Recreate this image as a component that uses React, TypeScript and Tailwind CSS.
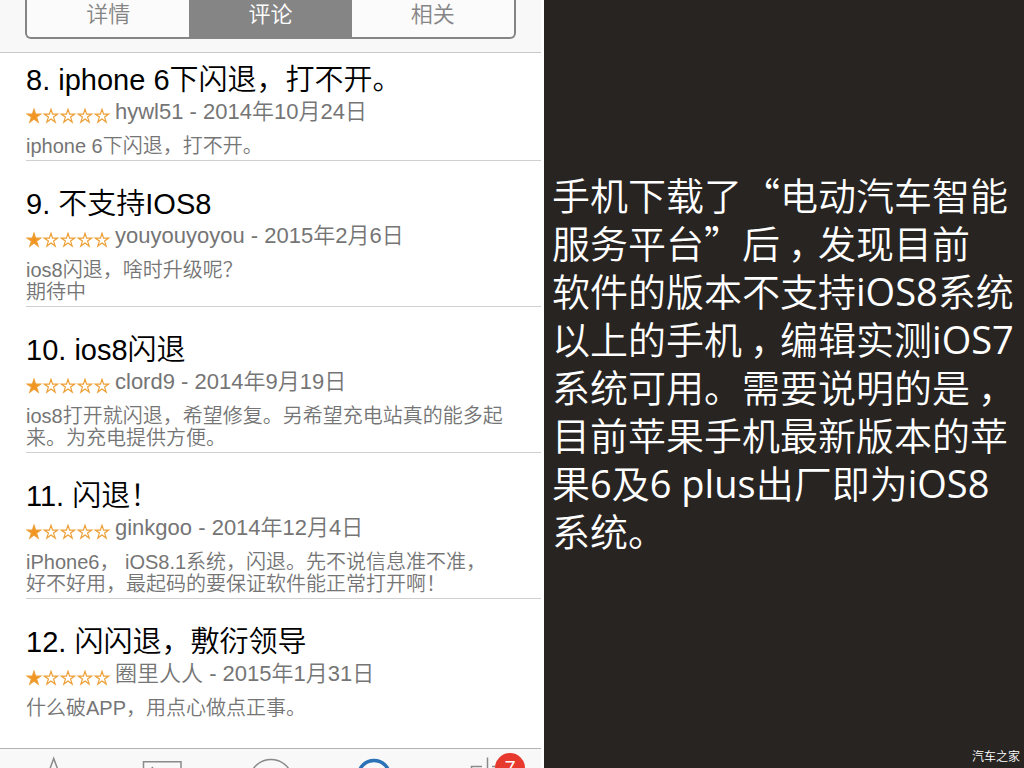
import type { ReactNode } from 'react';

type Review = {
  id: number;
  title: string;
  author: string;
  date: string;
  rating: number;
  content: string[];
};

const REVIEWS: Review[] = [
  {
    id: 8,
    title: 'iphone 6下闪退，打不开。',
    author: 'hywl51',
    date: '2014年10月24日',
    rating: 1,
    content: ['iphone 6下闪退，打不开。'],
  },
  {
    id: 9,
    title: '不支持IOS8',
    author: 'youyouyoyou',
    date: '2015年2月6日',
    rating: 1,
    content: ['ios8闪退，啥时升级呢？', '期待中'],
  },
  {
    id: 10,
    title: 'ios8闪退',
    author: 'clord9',
    date: '2014年9月19日',
    rating: 1,
    content: [
      'ios8打开就闪退，希望修复。另希望充电站真的能多起',
      '来。为充电提供方便。',
    ],
  },
  {
    id: 11,
    title: '闪退！',
    author: 'ginkgoo',
    date: '2014年12月4日',
    rating: 1,
    content: [
      'iPhone6， iOS8.1系统，闪退。先不说信息准不准，',
      '好不好用，最起码的要保证软件能正常打开啊！',
    ],
  },
  {
    id: 12,
    title: '闪闪退，敷衍领导',
    author: '圈里人人',
    date: '2015年1月31日',
    rating: 1,
    content: ['什么破APP，用点心做点正事。'],
  },
];

const SEGMENTS = ['详情', '评论', '相关'];

const Stars = ({ rating }: { rating: number }) => (
  <div className="flex pt-2" role="img" aria-label={`${rating} / 5`}>
    {[1, 2, 3, 4, 5].map((n) => (
      <svg key={n} width="17" height="17" viewBox="0 0 17 17">
        <path
          d="M8 1.3 L9.6 6.1 L14.7 6.1 L10.6 9.1 L12.2 14.1 L8 11.1 L3.8 14.1 L5.4 9.1 L1.3 6.1 L6.4 6.1 Z"
          fill={n <= rating ? '#f29420' : 'none'}
          stroke="#eda038"
          strokeWidth="1.2"
        />
      </svg>
    ))}
  </div>
);

const ReviewItem = ({ review }: { review: Review }) => (
  <li className="border-b border-[#d0d0d0] pt-[27px] pb-[3px] first:pt-[11px] last:border-0">
    <h3 className="text-[29px] leading-8 text-black">
      {review.id}. {review.title}
    </h3>
    <div className="flex h-8 items-center gap-1">
      <Stars rating={review.rating} />
      <p className="text-[22px] leading-8 text-[#757575]">
        {review.author} - {review.date}
      </p>
    </div>
    <p className="mt-[7px] text-[20px] leading-[22px] text-[#757575]">
      {review.content.map((line) => (
        <span key={line} className="block whitespace-nowrap">
          {line}
        </span>
      ))}
    </p>
  </li>
);

const TabButton = ({
  label,
  children,
}: {
  label: string;
  children: ReactNode;
}) => (
  <button
    type="button"
    aria-label={label}
    className="relative flex flex-1 justify-center overflow-hidden"
  >
    {children}
  </button>
);

const TabIcon = ({ children }: { children: ReactNode }) => (
  <svg
    width="60"
    height="20"
    viewBox="0 0 60 20"
    fill="none"
    stroke="#8a8a8a"
    strokeWidth="1.5"
  >
    {children}
  </svg>
);

const TabBar = () => (
  <nav className="flex h-5 shrink-0 border-t border-[#b2b2b2] bg-[#f8f8f8]">
    <TabButton label="精品推荐">
      <TabIcon>
        <path d="M25.5 21 L29.7 9.5 L34 21" />
      </TabIcon>
    </TabButton>
    <TabButton label="排行榜">
      <TabIcon>
        <path d="M11.5 21 V12.7 H49 V21 M19.5 19.5 L21 18" />
      </TabIcon>
    </TabButton>
    <TabButton label="探索">
      <TabIcon>
        <circle cx="30" cy="32" r="21.5" />
      </TabIcon>
    </TabButton>
    <TabButton label="搜索">
      <TabIcon>
        <circle cx="25" cy="27" r="15.5" stroke="#2a72b5" strokeWidth="3.5" />
      </TabIcon>
    </TabButton>
    <TabButton label="更新">
      <TabIcon>
        <path d="M14.5 21 V17.5 H25 M30.5 8.5 V21 M35 17.5 H46" />
      </TabIcon>
      <span className="absolute top-1 right-4 flex size-[30px] justify-center rounded-full bg-[#e8392f] pt-[3px] text-[20px] leading-6 text-white">
        7
      </span>
    </TabButton>
  </nav>
);

const Phone = () => (
  <section className="flex min-w-0 flex-col overflow-hidden bg-white pr-[3px] font-['Liberation_Sans','Noto_Sans_CJK_SC',sans-serif]">
    <header className="shrink-0 border-b border-[#c8c8c8] bg-[#f8f8f8] pr-[25px] pb-[13px] pl-[25px]">
      <div className="grid h-[39px] grid-cols-3 overflow-hidden rounded-b-md border-2 border-t-0 border-[#858585] bg-[#fbfbfb]">
        {SEGMENTS.map((name) => (
          <button
            key={name}
            type="button"
            aria-pressed={name === '评论'}
            className="pb-2 text-[22px] leading-[30px] text-[#858585] aria-pressed:bg-[#858585] aria-pressed:text-white"
          >
            {name}
          </button>
        ))}
      </div>
    </header>
    <ul className="min-h-0 flex-1 overflow-hidden pl-[26px]">
      {REVIEWS.map((review) => (
        <ReviewItem key={review.id} review={review} />
      ))}
    </ul>
    <TabBar />
  </section>
);

// full-width quotes come from the CJK face, not from Open Sans
const Quote = ({ children }: { children: ReactNode }) => (
  <span className="font-['Noto_Sans_CJK_SC',sans-serif] leading-none">
    {children}
  </span>
);

// Open Sans gets too thin at the weight of the Chinese text
const Latin = ({ children }: { children: ReactNode }) => (
  <span className="font-normal">{children}</span>
);

// the comma sits in the middle of its cell
const Comma = () => <span className="-mr-2 pl-2">，</span>;

const Caption = () => (
  <section className="flex min-w-0 flex-col justify-between overflow-hidden bg-[#272422] pt-[171px] pl-2 font-['Open_Sans','Noto_Sans_CJK_SC',sans-serif] text-white">
    <p className="text-[38px] leading-[48px] whitespace-nowrap">
      手机下载了<Quote>“</Quote>电动汽车智能
      <br />
      服务平台<Quote>”</Quote>后<Comma />
      发现目前
      <br />
      软件的版本不支持<Latin>iOS8</Latin>系统
      <br />
      以上的手机
      <Comma />
      编辑实测<Latin>iOS7</Latin>
      <br />
      系统可用。需要说明的是
      <Comma />
      <br />
      目前苹果手机最新版本的苹
      <br />果<Latin>6</Latin>及<Latin>6 plus</Latin>出厂即为<Latin>iOS8</Latin>
      <br />
      系统。
    </p>
    <small className="self-end pr-1 pb-[2px] text-[12px] leading-[18px]">
      汽车之家
    </small>
  </section>
);

export default function App() {
  return (
    <main
      lang="zh-CN"
      className="grid h-screen grid-cols-[17fr_15fr] font-[350]"
    >
      <Phone />
      <Caption />
    </main>
  );
}
